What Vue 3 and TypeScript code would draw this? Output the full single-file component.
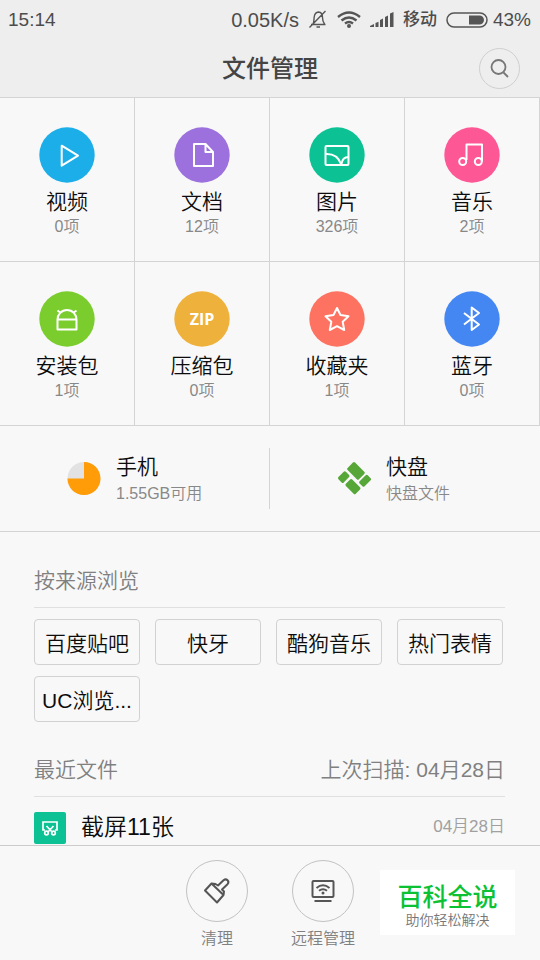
<script setup lang="ts">
interface Category {
  id: string
  name: string
  count: string
  color: string
}

const categories: Category[] = [
  { id: 'video', name: '视频', count: '0项', color: '#1baee9' },
  { id: 'doc', name: '文档', count: '12项', color: '#9c70dd' },
  { id: 'picture', name: '图片', count: '326项', color: '#0cc294' },
  { id: 'music', name: '音乐', count: '2项', color: '#fe5795' },
  { id: 'apk', name: '安装包', count: '1项', color: '#7acd2c' },
  { id: 'zip', name: '压缩包', count: '0项', color: '#eeb13c' },
  { id: 'favorite', name: '收藏夹', count: '1项', color: '#fd7260' },
  { id: 'bluetooth', name: '蓝牙', count: '0项', color: '#4487f3' },
]

const sources: string[] = ['百度贴吧', '快牙', '酷狗音乐', '热门表情', 'UC浏览...']
</script>

<template>
  <div class="app">
    <header class="header">
      <div class="status">
        <span class="clock">15:14</span>
        <span class="speed">0.05K/s</span>
        <svg class="bell" width="20" height="20" viewBox="0 0 20 20" aria-hidden="true">
          <path d="M3 14.500h14.500M5 14c1.200-2 .8-4.500 1.200-7C6.600 4 8.300 2.200 10.500 2c3 .2 4 2.500 4 5.500 0 3 .5 4.500 2 6.500M8.500 17h3.500M1.500 17.500 17.500 1" />
        </svg>
        <svg class="wifi" width="24" height="18" viewBox="0 0 24 18" aria-hidden="true">
          <path d="M1 6Q12-3 23 6M4.500 9.500Q12 3.500 19.500 9.500M8 12.500Q12 9.500 16 12.500" />
          <circle cx="12" cy="15" r="2" />
        </svg>
        <svg class="signal" width="24" height="18" viewBox="0 0 24 18" aria-hidden="true">
          <path d="M0 16v-1l4-2v3zM5.500 16v-4l3-1.200V16zM10 16V9l3-1.500V16zM15 16V6l3-1.500V16zM20 16V2.500L23.500 1v15z" />
        </svg>
        <span class="carrier">移动</span>
        <svg class="battery" width="42" height="16" viewBox="0 0 42 16" aria-hidden="true">
          <rect class="shell" x="1" y="1" width="40" height="14" rx="7" />
          <path class="level" d="M23 3.500h10.500a4.500 4.500 0 0 1 0 9H23z" />
        </svg>
        <span>43%</span>
      </div>
      <div class="titlebar">
        <h1>文件管理</h1>
        <button class="search" type="button" aria-label="搜索">
          <svg width="20" height="20" viewBox="0 0 20 20" aria-hidden="true">
            <circle cx="8.500" cy="8" r="7" />
            <path d="m13.500 13.500 4.500 4.500" />
          </svg>
        </button>
      </div>
    </header>

    <main class="content">
      <nav class="categories">
        <button v-for="c in categories" :key="c.id" type="button" class="category">
          <svg class="disc" width="56" height="56" viewBox="0 0 56 56" aria-hidden="true">
            <circle class="fill" cx="28" cy="28" r="27.700" :fill="c.color" />
            <path v-if="c.id === 'video'" d="M22.700 18.700v20L39 28.700z" />
            <path v-else-if="c.id === 'doc'" d="M20 17h11.500l7.500 8v14H20zM31.500 17v8H39" />
            <g v-else-if="c.id === 'picture'">
              <rect x="16.500" y="19" width="23" height="19" rx="1" />
              <path d="M16.500 27c8-.5 13 3 15.500 10M39.500 30c-4 0-6.500 3-7 7" />
            </g>
            <g v-else-if="c.id === 'music'">
              <circle cx="18.700" cy="34.500" r="3.500" />
              <circle cx="34.300" cy="34.500" r="3.500" />
              <path d="M22.500 33V17.500H38V34.500" />
            </g>
            <path v-else-if="c.id === 'apk'" d="M18.500 28.500h19v10h-19zM18.500 28.500c0-5 4-9.500 9.500-9.500s9.500 4.500 9.500 9.500M18.500 19.500l3.500 2.500M37.500 19.500 34 22" />
            <text v-else-if="c.id === 'zip'" x="28" y="34" text-anchor="middle">ZIP</text>
            <path v-else-if="c.id === 'favorite'" d="m28 17 3.500 7 8 1.200-5.800 5.500 1.500 8.300L28 35.200 20.800 39l1.500-8.300-5.800-5.500 8-1.200z" />
            <path v-else d="m20 22 15 11.500-7.300 5.500V16.500L35 22 20 33.500" />
          </svg>
          <span class="name">{{ c.name }}</span>
          <span class="count">{{ c.count }}</span>
        </button>
      </nav>

      <section class="storage">
        <button type="button" class="volume">
          <svg width="34" height="34" viewBox="0 0 34 34" aria-hidden="true">
            <circle cx="17" cy="16.500" r="16.500" fill="#e2e2e2" />
            <path d="M17 0A16.500 16.500 0 1 1 .5 16.500H17z" fill="#ff9c07" />
          </svg>
          <span class="info">
            <span class="name">手机</span>
            <span class="count">1.55GB可用</span>
          </span>
        </button>
        <button type="button" class="volume">
          <svg width="34" height="34" viewBox="0 0 34 34" aria-hidden="true">
            <g fill="#56a638" transform="rotate(45 17 16.500)">
              <rect x="5" y="4.500" width="16" height="10.500" rx="1.500" />
              <rect x="23" y="4.500" width="7" height="11.500" rx="1.500" />
              <rect x="5" y="17.500" width="7.500" height="10.500" rx="1.500" />
              <rect x="15" y="18.500" width="14" height="9" rx="1.500" />
            </g>
          </svg>
          <span class="info">
            <span class="name">快盘</span>
            <span class="count">快盘文件</span>
          </span>
        </button>
      </section>

      <section class="block">
        <h2 class="heading">按来源浏览</h2>
        <div class="chips">
          <button v-for="s in sources" :key="s" type="button" class="chip">{{ s }}</button>
        </div>
      </section>

      <section class="block recent">
        <h2 class="heading">
          <span>最近文件</span>
          <span>上次扫描: 04月28日</span>
        </h2>
        <a class="file" href="#">
          <svg width="32" height="32" viewBox="0 0 32 32" aria-hidden="true">
            <rect width="32" height="32" rx="2" fill="#0cc294" />
            <path d="M11 18H9V10h14v8h-2M12.500 14l6 6.500M19.500 14l-6 6.500" />
            <circle cx="12.500" cy="21" r="1.800" />
            <circle cx="19.500" cy="21" r="1.800" />
          </svg>
          <span class="filename">截屏11张</span>
          <time>04月28日</time>
        </a>
      </section>
    </main>

    <footer class="toolbar">
      <button type="button" class="tool">
        <span class="ring">
          <svg width="30" height="30" viewBox="0 0 30 30" aria-hidden="true">
            <path d="m9.500 7.500 12 11.500-6.500 7.500L3 14.500zM9.500 7.500l4 .5 2.500 1.500 5.500-5.300c3-2.200 6.500 1 4 4L20 13.500l2 2-.5 3.500" />
          </svg>
        </span>
        <span>清理</span>
      </button>
      <button type="button" class="tool">
        <span class="ring">
          <svg width="30" height="30" viewBox="0 0 30 30" aria-hidden="true">
            <rect x="4.500" y="5" width="21" height="16" rx="1" />
            <path d="M6.500 25h17M8.500 12q6.500-5.500 13 0M11 14.800q4-3.200 8 0" />
            <circle class="dot" cx="15" cy="17" r="1.500" />
          </svg>
        </span>
        <span>远程管理</span>
      </button>
      <aside class="badge">
        <strong>百科全说</strong>
        <span>助你轻松解决</span>
      </aside>
    </footer>
  </div>
</template>

<style>
body {
  margin: 0;
  background: #f8f8f8;
}
</style>

<style scoped>
.app {
  display: flex;
  flex-direction: column;
  height: 100vh;
  background: #f8f8f8;
  color: #0c0c0c;
  font-family: "Liberation Sans", "Noto Sans CJK SC", sans-serif;
  font-size: 21px;
  font-weight: 350;
}
.app * {
  box-sizing: border-box;
}
button {
  margin: 0;
  padding: 0;
  border: 0;
  background: none;
  color: inherit;
  font: inherit;
  cursor: pointer;
}
svg {
  display: block;
  flex: none;
  fill: none;
}

/* header */
.header {
  flex: none;
  background: #eeeeee;
  border-bottom: 1px solid #d4d4d4;
}
.status {
  display: flex;
  align-items: center;
  gap: 9px;
  height: 40px;
  padding: 0 9px 0 8px;
  color: #4c4c4c;
  font-size: 19px;
  font-weight: 400;
  line-height: 24px;
}
.clock {
  flex: 1;
}
.speed {
  font-size: 20px;
}
.carrier {
  font-size: 17px;
  font-weight: 500;
  line-height: 26px;
}
.battery {
  margin-right: -4px;
}
.bell {
  stroke: #555555;
  stroke-width: 1.4;
}
.wifi {
  stroke: #555555;
  stroke-width: 2.4;
}
.wifi circle {
  fill: #555555;
  stroke: none;
}
.signal,
.level {
  fill: #555555;
}
.shell {
  stroke: #555555;
  stroke-width: 1.5;
}
.titlebar {
  display: grid;
  grid-template-columns: 1fr auto 1fr;
  align-items: center;
  height: 57px;
  padding: 0 20px;
}
h1 {
  grid-column: 2;
  margin: 0;
  color: #444444;
  font-size: 24px;
  font-weight: 500;
  line-height: 32px;
}
.search {
  display: grid;
  place-items: center;
  justify-self: end;
  width: 41px;
  height: 41px;
  border: 1px solid #cfcfcf;
  border-radius: 50%;
}
.search svg {
  stroke: #777777;
  stroke-width: 1.8;
}

/* main */
.content {
  flex: 1;
  min-height: 0;
  overflow: hidden auto;
  scrollbar-width: none;
}
.categories {
  display: grid;
  grid-template-columns: repeat(4, 1fr);
}
.category {
  display: flex;
  flex-direction: column;
  align-items: center;
  height: 164px;
  padding-top: 29px;
  border-right: 1px solid #d4d4d4;
  border-bottom: 1px solid #d4d4d4;
}
.disc {
  stroke: #ffffff;
  stroke-width: 2;
  stroke-linejoin: round;
}
.disc .fill {
  stroke: none;
}
.disc text {
  fill: #ffffff;
  stroke: none;
  font: 700 16px "Open Sans", sans-serif;
}
.name {
  line-height: 28px;
  margin-top: 5px;
}
.count {
  color: #888888;
  font-size: 16px;
  line-height: 22px;
}
.storage {
  display: grid;
  grid-template-columns: 1fr 1fr;
  padding: 22px 0;
  border-bottom: 1px solid #d4d4d4;
}
.volume {
  display: flex;
  align-items: center;
  gap: 15px;
  height: 61px;
  padding-left: 67px;
  text-align: left;
}
.volume:first-child {
  border-right: 1px solid #d4d4d4;
}
.info {
  display: flex;
  flex-direction: column;
}
.info .name {
  margin: 0;
  line-height: 30px;
}
.info .count {
  line-height: 24px;
}
.block {
  padding: 24px 35px 0 34px;
}
.recent {
  padding-top: 23px;
}
.heading {
  display: flex;
  justify-content: space-between;
  margin: 0;
  height: 52px;
  border-bottom: 1px solid #e0e0e0;
  color: #808080;
  font-size: 21px;
  font-weight: 350;
  line-height: 50px;
}
.chips {
  display: grid;
  grid-template-columns: repeat(4, 1fr);
  gap: 11px 15px;
  padding: 11px 2px 0 0;
}
.chip {
  height: 46px;
  border: 1px solid #d2d2d2;
  border-radius: 4px;
  white-space: nowrap;
}
.file {
  display: flex;
  align-items: center;
  gap: 15px;
  height: 61px;
  color: inherit;
  line-height: 32px;
  text-decoration: none;
}
.file svg {
  stroke: #ffffff;
  stroke-width: 1.7;
}
.file svg rect {
  stroke: none;
}
.filename {
  flex: 1;
  font-size: 23px;
  padding-bottom: 2px;
}
time {
  padding-bottom: 2px;
  color: #a0a0a0;
  font-size: 17px;
}

/* bottom bar */
.toolbar {
  position: relative;
  flex: none;
  display: flex;
  justify-content: center;
  height: 115px;
  padding-top: 14px;
  border-top: 1px solid #cccccc;
}
.tool {
  display: flex;
  flex-direction: column;
  align-items: center;
  gap: 5px;
  width: 106px;
  color: #808080;
  font-size: 16px;
  line-height: 24px;
}
.ring {
  display: grid;
  place-items: center;
  width: 62px;
  height: 62px;
  border: 1px solid #c2c2c2;
  border-radius: 50%;
}
.ring svg {
  stroke: #555555;
  stroke-width: 2;
  stroke-linejoin: round;
}
.ring .dot {
  fill: #555555;
  stroke: none;
}
.badge {
  position: absolute;
  right: 25px;
  bottom: 25px;
  display: flex;
  flex-direction: column;
  align-items: center;
  width: 135px;
  height: 65px;
  padding-top: 12px;
  background: #ffffff;
}
.badge strong {
  color: #0cc234;
  font-size: 25px;
  font-weight: 500;
  line-height: 30px;
}
.badge span {
  color: #777777;
  font-size: 14px;
  line-height: 16px;
}
</style>
